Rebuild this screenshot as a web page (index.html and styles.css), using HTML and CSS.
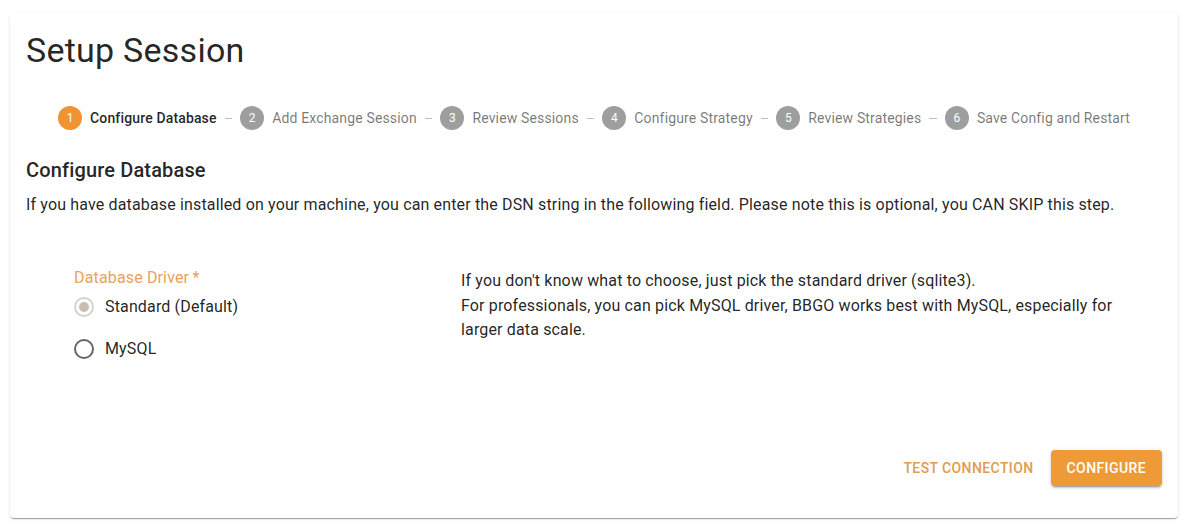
FILE: index.html
```html
<!DOCTYPE html>
<html>
<head>
<meta charset="utf-8">
<link rel="stylesheet" href="styles.css">
</head>
<body>
<div class="page">
  <div class="card">
    <h4 class="title">Setup Session</h4>
    <div class="stepper">
      <div class="step active"><span class="icon">1</span><span class="label">Configure Database</span></div>
      <div class="connector"><span></span></div>
      <div class="step"><span class="icon">2</span><span class="label">Add Exchange Session</span></div>
      <div class="connector"><span></span></div>
      <div class="step"><span class="icon">3</span><span class="label">Review Sessions</span></div>
      <div class="connector"><span></span></div>
      <div class="step"><span class="icon">4</span><span class="label">Configure Strategy</span></div>
      <div class="connector"><span></span></div>
      <div class="step"><span class="icon">5</span><span class="label">Review Strategies</span></div>
      <div class="connector"><span></span></div>
      <div class="step"><span class="icon">6</span><span class="label">Save Config and Restart</span></div>
    </div>
    <h6 class="subtitle">Configure Database</h6>
    <p class="desc">If you have database installed on your machine, you can enter the DSN string in the following field. Please note this is optional, you CAN SKIP this step.</p>
    <div class="grid">
      <div class="form">
        <div class="form-label">Database Driver&thinsp;*</div>
        <label class="radio-row">
          <span class="radio checked"><span class="dot"></span></span>
          <span class="radio-text">Standard (Default)</span>
        </label>
        <label class="radio-row">
          <span class="radio"></span>
          <span class="radio-text">MySQL</span>
        </label>
      </div>
      <div class="help">
        <p>If you don't know what to choose, just pick the standard driver (sqlite3).<br>For professionals, you can pick MySQL driver, BBGO works best with MySQL, especially for larger data scale.</p>
      </div>
    </div>
    <div class="actions">
      <button class="btn btn-text">Test Connection</button>
      <button class="btn btn-contained">Configure</button>
    </div>
  </div>
</div>
</body>
</html>
```
FILE: styles.css
```css
* { box-sizing: border-box; }
html, body { margin: 0; padding: 0; background: #fff; }
body {
  font-family: Roboto, "Noto Sans", "Liberation Sans", sans-serif;
  color: rgba(0,0,0,0.87);
}
.page { padding: 13px 12px 13px 10px; }
.card {
  width: 1168px;
  height: 505px;
  background: #fff;
  border-radius: 4px;
  box-shadow: 0 2px 1px -1px rgba(0,0,0,0.2), 0 1px 1px 0 rgba(0,0,0,0.14), 0 1px 3px 0 rgba(0,0,0,0.12);
  padding: 16px;
}
.title {
  margin: 0 0 11px;
  font-size: 34px;
  font-weight: 400;
  line-height: 42px;
  letter-spacing: 0.00735em;
}
.stepper {
  display: flex;
  align-items: center;
  padding: 24px;
}
.step {
  display: flex;
  align-items: center;
  padding: 0 8px;
  flex: 0 0 auto;
}
.icon {
  width: 24px; height: 24px;
  border-radius: 50%;
  background: #9e9e9e;
  color: #fff;
  font-size: 12px;
  display: flex; align-items: center; justify-content: center;
  margin-right: 8px;
}
.step.active .icon { background: #ef9430; }
.label {
  font-size: 14px;
  line-height: 20px;
  color: rgba(0,0,0,0.54);
  letter-spacing: 0.01071em;
}
.step.active .label { color: rgba(0,0,0,0.87); font-weight: 500; }
.connector { flex: 1 1 auto; }
.connector span { display: block; border-top: 1px solid #bdbdbd; }
.subtitle {
  margin: 0 0 7px;
  font-size: 20px;
  font-weight: 500;
  line-height: 32px;
  letter-spacing: 0.0075em;
}
.desc {
  margin: 0;
  font-size: 16px;
  line-height: 24px;
  letter-spacing: 0.00938em;
}
.grid {
  display: grid;
  grid-template-columns: 387px 653px;
  margin: 49px 0 0 48px;
}
.form { display: flex; flex-direction: column; }
.form-label {
  font-size: 16px;
  height: 20px;
  line-height: 24px;
  color: #e8a25c;
  letter-spacing: 0.00938em;
}
.radio-row {
  display: flex;
  align-items: center;
  height: 42px;
}
.radio {
  width: 20px; height: 20px;
  border-radius: 50%;
  border: 2px solid rgba(0,0,0,0.6);
  display: flex; align-items: center; justify-content: center;
  margin-right: 11px;
}
.radio.checked { border-color: #d6d1cc; }
.radio .dot { width: 10px; height: 10px; border-radius: 50%; background: #c9beb2; }
.radio-text {
  font-size: 16px;
  line-height: 24px;
  letter-spacing: 0.00938em;
}
.help p {
  margin: 3px 0 0;
  font-size: 16px;
  line-height: 24.5px;
  letter-spacing: 0.00938em;
}
.actions {
  display: flex;
  justify-content: flex-end;
  gap: 9px;
  margin-top: 80px;
}
.btn {
  font-family: inherit;
  font-size: 14px;
  font-weight: 500;
  text-transform: uppercase;
  letter-spacing: 0.02857em;
  line-height: 24px;
  height: 36px;
  border: 0;
  border-radius: 4px;
  cursor: pointer;
}
.btn-text { background: transparent; color: #e39b4c; padding: 6px 8px; }
.btn-contained {
  background: #ed9a37;
  color: #fff;
  padding: 6px 16px;
  box-shadow: 0 3px 1px -2px rgba(0,0,0,0.2), 0 2px 2px 0 rgba(0,0,0,0.14), 0 1px 5px 0 rgba(0,0,0,0.12);
}
```
